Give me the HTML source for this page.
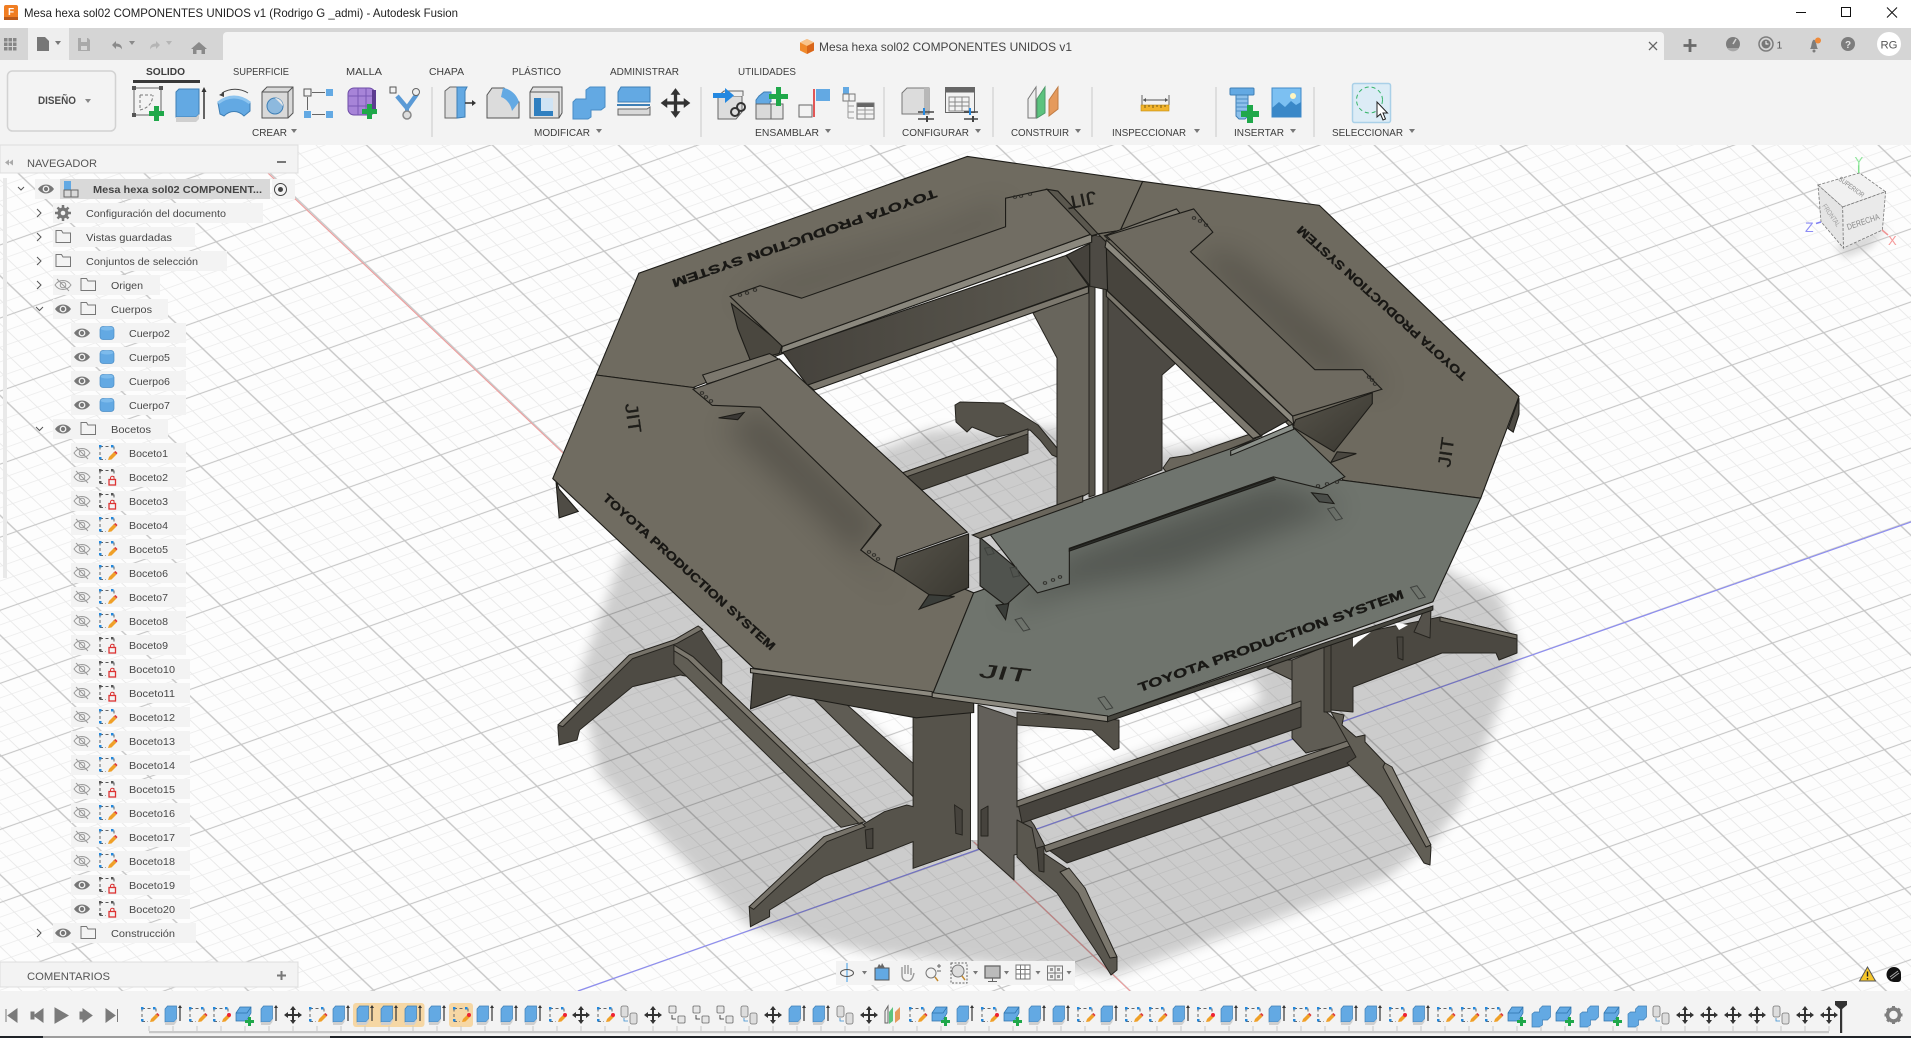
<!DOCTYPE html>
<html lang="es"><head><meta charset="utf-8"><title>Mesa hexa sol02 COMPONENTES UNIDOS v1 - Autodesk Fusion</title>
<style>
html,body{margin:0;padding:0;width:1911px;height:1038px;overflow:hidden;background:#fdfdfd}
svg{display:block}
text{font-family:"Liberation Sans",sans-serif;fill:#454545}
.s polygon,.s path,.s line{vector-effect:non-scaling-stroke}
.tr{font-size:10.5px;fill:#484848}
.tb{font-size:10.5px;fill:#3d3d3d}
.tt{font-weight:bold;fill:#191815;stroke:#191815;stroke-width:.35px}
.jt{fill:#1f1e1a;font-weight:normal;stroke:#1f1e1a;stroke-width:.3px}
</style></head><body>
<svg xmlns="http://www.w3.org/2000/svg" width="1911" height="1038" viewBox="0 0 1911 1038">
<defs>
<pattern id="grid" width="100" height="100" patternUnits="userSpaceOnUse" patternTransform="matrix(.919 -.324 .5607 .533 981 849)">
<path d="M20 0V100M40 0V100M60 0V100M80 0V100M0 20H100M0 40H100M0 60H100M0 80H100" stroke="#e9e9e9" stroke-width="1.1" fill="none"/>
<path d="M0 0V100M0 0H100M100 0V100M0 100H100" stroke="#c6c6c6" stroke-width="1.6" fill="none"/>
</pattern>
<filter id="b1" x="-10%" y="-10%" width="120%" height="120%"><feGaussianBlur stdDeviation="6"/></filter>
<filter id="b2" x="-30%" y="-30%" width="160%" height="160%"><feGaussianBlur stdDeviation="24 40"/></filter>
<filter id="b3" x="-30%" y="-30%" width="160%" height="160%"><feGaussianBlur stdDeviation="4"/></filter>
<clipPath id="topclip"><polygon points="670,18 1222,155 1535,690 1400,1265 890,1587 615,1526 335,1451 20,920 155,345"/></clipPath>
<linearGradient id="dk1" x1="0" y1="0" x2="1" y2="0"><stop offset="0" stop-color="#45423c"/><stop offset="1" stop-color="#5c5950"/></linearGradient>
<linearGradient id="dk2" x1="0" y1="0" x2="1" y2="1"><stop offset="0" stop-color="#57544b"/><stop offset="1" stop-color="#38362f"/></linearGradient>

<g id="eye"><path d="M-8 0C-4-6 4-6 8 0C4 6-4 6-8 0Z" fill="#777"/><circle r="3.4" fill="#f3f3f3"/><circle r="2.1" fill="#777"/></g>
<g id="eyeoff" fill="none" stroke="#9a9a9a"><path d="M-8 0C-4-6 4-6 8 0C4 6-4 6-8 0Z"/><circle r="2.8"/><path d="M-6-6L6 6"/></g>
<path id="fold" d="M-7-6.5h5.5l1.5 2.5h7.5v9.5h-14.500z" fill="none" stroke="#777" stroke-width="1"/>
<g id="cyl"><rect x="-7" y="-6.500" width="14" height="13" rx="3" fill="#63a9e3" stroke="#4c8dc6" stroke-width=".7"/><ellipse cy="-4.500" rx="6.500" ry="2" fill="#7dbbec"/></g>
<g id="skp"><path d="M-7-6.500h12M-7-6.500v12M-7 6.500h6M7-6.500v7" fill="none" stroke="#666" stroke-dasharray="3 2.500"/><path d="M-8-8h2.500v2.500h-2.500zM4-8h2.500v2.500h-2.500zM-8 4h2.500v2.500h-2.500z" fill="#2288dd"/><path d="M1 7l1-3 5-5 2.500 2.500-5 5z" fill="#f0a028"/><path d="M7-1l2.500 2.500 1-1.500-2-2z" fill="#dd3b3b"/></g>
<g id="skl"><path d="M-7-6.500h12M-7-6.500v12M-7 6.500h6M7-6.500v6" fill="none" stroke="#555" stroke-dasharray="3 2.500"/><path d="M-8-8h2.500v2.500h-2.500zM4-8h2.500v2.500h-2.500zM-8 4h2.500v2.500h-2.500z" fill="#555"/><rect x="2" y="2.500" width="6.500" height="5.500" fill="none" stroke="#d33" stroke-width="1.300"/><path d="M3.500 2.500v-1.500a1.800 1.800 0 0 1 3.600 0v1.500" fill="none" stroke="#d33"/></g>
<g id="skr"><path d="M-7-6.500h12M-7-6.500v12M-7 6.500h6M7-6.500v7" fill="none" stroke="#666" stroke-dasharray="3 2.500"/><path d="M-8-8h2.500v2.500h-2.500zM4-8h2.500v2.500h-2.500zM-8 4h2.500v2.500h-2.500z" fill="#2288dd"/><path d="M1 7l1-3 5-5 2.500 2.500-5 5z" fill="#f0a028"/><circle cx="8" cy="0" r="2" fill="#e23"/></g>
<g id="tex"><path d="M-8-6l2.500-3h9v13l-2.500 3h-9z" fill="#63a9e3" stroke="#3f7fb5" stroke-width=".7"/><path d="M-8 7h9l2.500-3v3l-2.500 3h-9z" fill="#cfcfcf"/><path d="M7-8v14" stroke="#333" stroke-width="1.200"/><path d="M7-10l-2 3h4z" fill="#333"/></g>
<g id="tbx"><path d="M-9-2l4-6h11v6l-4 7v1h-11z" fill="#63a9e3" stroke="#2d72ac" stroke-width=".7"/><path d="M-9-2h11l4-6" fill="none" stroke="#2d72ac" stroke-width=".7"/><path d="M3 2h3v3h3v3h-3v3h-3v-3h-3v-3h3z" fill="#1fa84a"/></g>
<g id="tmv" fill="#333"><path d="M-1-6h2v12h-2zM-6-1h12v2h-12z"/><path d="M0-9l3 4h-6zM0 9l3-4h-6zM-9 0l4-3v6zM9 0l-4-3v6z"/></g>
<g id="tln" fill="#ddd" stroke="#777" stroke-width=".8"><rect x="-8" y="-9" width="7" height="11" rx="2"/><rect x="1" y="-2" width="7" height="11" rx="2"/><path d="M-5 3v3h4" fill="none" stroke="#3a8ed0"/></g>
<g id="tcp" fill="#e6e6e6" stroke="#666" stroke-width=".8"><rect x="-8" y="-9" width="7" height="7" rx="1"/><rect x="1" y="1" width="7" height="7" rx="1"/><path d="M-5 0v4h4" fill="none" stroke="#222"/></g>
<g id="tcb"><path d="M-9-1l2.500-2h5v-3l3-3h8v11l-3 3h-5v5l-3 2h-7.500z" fill="#63a9e3" stroke="#3f7fb5" stroke-width=".7"/></g>
<g id="tpl"><path d="M-8-4l3-5v17h-3z" fill="#eee" stroke="#666"/><path d="M-4-3l4-5v14l-4 3z" fill="#5cc37e"/><path d="M2-3l5-5v12l-5 4z" fill="#e59a5c"/></g>
</defs>

<rect width="1911" height="1038" fill="#fdfdfd"/>
<rect width="1911" height="1038" fill="url(#grid)"/>
<path d="M232 139L563 453M974 842L1130 991" stroke="#ee9c9c" stroke-width="1.100" fill="none"/>
<path d="M578 991L974 851L1911 522" stroke="#8d8df0" stroke-width="1.200" fill="none"/>

<!-- floor shadow -->
<path fill="#000" opacity=".19" fill-rule="evenodd" filter="url(#b1)" d="M887 447L930 430L1057 427L1163 450L1261 439L1452 573L1500 595L1520 650L1490 733L1460 807L1435 840L1388 877L1331 900L1114 975L872 953L750 927L600 775L578 680L623 553L795 473ZM1014 727L1253 677L1262 700L1215 725L1019 800ZM838 695L920 705L920 770Z"/>
<rect x="971" y="700" width="7" height="140" fill="#fcfcfc"/>
<rect x="1095" y="280" width="8" height="215" fill="#fcfcfc"/>

<!-- structure visible through the opening (real coordinates) -->
<g stroke="#26241f" stroke-width="1" stroke-linejoin="round">
<polygon fill="#55524a" points="955,405 960,402 1003,403 1038,425 1057,448 1057,457 1052,455 1040,440 1030,430 997,437 972,427 967,432 956,422"/>
<polygon fill="#68655c" points="1033,313 1089,290 1089,493 1057,510 1057,358"/>
<polygon fill="#4c4941" points="902,473 1028,429 1028,453 922,490"/>
<polygon fill="#726e64" points="902,473 1028,429 1028,434 906,477"/>
<polygon fill="#57544c" points="1089,280 1095,280 1095,495 1089,497"/>
<polygon fill="#57544c" points="1103,280 1108,280 1108,492 1103,494"/>
<polygon fill="#4d4a44" points="1108,290 1177,362 1162,375 1162,470 1108,492"/>
<polygon fill="#4d4a44" points="1089,234 1108,238 1108,290 1089,286"/>
<polygon fill="#6a665c" points="1163,468 1170,458 1190,455 1215,446 1262,430 1262,436 1168,474"/>
</g>

<!-- legs -->
<g class="s" transform="translate(540 540) scale(.63776 .33333)" stroke="#26241f" stroke-width="1">
<polygon fill="#4e4b44" points="28,560 140,350 210,305 250,262 285,360 285,430 220,405 145,440 62,570 58,600 30,615"/>
<polygon fill="#77736a" points="28,555 140,345 210,300 248,258 255,268 215,310 145,356 36,560"/>
<polygon fill="#5f5c54" points="415,450 470,475 585,670 585,770"/>
<polygon fill="#56534b" points="585,510 675,490 675,925 585,985 585,905 445,1010 360,1110 360,1130 330,1160 328,1100 445,895 505,855 540,815 575,795 585,800"/>
<polygon fill="#77736a" points="328,1100 445,890 505,850 510,860 450,905 335,1108"/>
<polygon fill="#615e55" points="210,315 240,350 510,845 472,862 210,372"/>
<polygon fill="#7b776d" points="210,315 240,350 510,845 500,850 232,358 210,332"/>
<polygon fill="#46433d" points="650,795 662,810 662,885 652,880"/>
<polygon fill="#46433d" points="510,870 522,865 522,925 512,925"/>
</g>
<g stroke="#26241f" stroke-width="1" stroke-linejoin="round">
<polygon fill="#4b4841" points="1324,647 1345,636 1440,617 1517,635 1517,653 1499,660 1496,653 1442,653 1353,687 1353,712 1331,710"/>
<polygon fill="#726e64" points="1440,617 1517,635 1517,639 1440,621"/>
<polygon fill="#fcfcfc" stroke="none" points="1353,637 1371,632 1358,642 1353,647"/>
<polygon fill="#fcfcfc" stroke="none" points="1394,622 1408,625 1399,630"/>
<polygon fill="#55524b" points="1424,610 1431,608 1430,638 1414,632"/>
<polygon fill="#46433d" points="1397,637 1403,637 1403,660 1398,658"/>
<polygon fill="#5f5c54" points="1267,668 1283,660 1292,660 1292,680"/>
<polygon fill="#5f5c54" points="1292,660 1324,647 1324,710 1344,727 1356,740 1306,753 1292,738"/>
<polygon fill="#4c4941" points="1331,643 1324,647 1324,712 1331,712"/>
<!-- center right upright and fin -->
<polygon fill="#55524a" points="1017,712 1119,720 1119,748 1114,750 1092,730 1017,725"/>
<polygon fill="#63605a" points="978,705 1017,718 1017,802 1034,825 1046,848 1014,855 1014,880 978,848"/>
<polygon fill="#46433d" points="981,810 988,806 988,836 981,836"/>
<!-- beams -->
<polygon fill="#47443e" points="1018,803 1301,703 1301,727 1022,823"/>
<polygon fill="#77736a" points="1017,801 1301,701 1301,707 1017,807"/>
<polygon fill="#47443e" points="1046,848 1356,740 1356,763 1067,863"/>
<polygon fill="#77736a" points="1044,846 1356,738 1356,744 1046,852"/>
<!-- front right leg (far) -->
<polygon fill="#615e55" points="1331,712 1344,715 1342,725 1356,737 1365,735 1365,742 1385,763 1431,847 1430,865 1424,863 1414,847 1381,797 1347,763 1356,757"/>
<polygon fill="#7b776d" points="1385,763 1392,767 1431,845 1426,847 1383,767"/>
<!-- front right leg (near) -->
<polygon fill="#5a574f" points="1017,820 1032,828 1036,848 1069,870 1085,890 1117,957 1117,970 1111,975 1100,957 1057,893 1030,870 1017,857"/>
<polygon fill="#7b776d" points="1069,868 1085,888 1117,957 1110,958 1078,893 1060,872"/>
<polygon fill="#46433d" points="1037,848 1044,846 1044,872 1039,871"/>
</g>

<!-- table ring -->
<g class="s" transform="translate(540 150) scale(.63776 .35714)" stroke="#1d1c18" stroke-width="1.100">
<polygon fill="#4f4c45" points="25,925 30,1030 60,1012 30,950"/>
<polygon fill="#4f4c45" points="1535,695 1518,780 1526,790 1535,740"/>
<polygon fill="#4a473f" points="335,1451 330,1565 390,1525 590,1590 680,1575 680,1545 615,1530"/>
<polygon fill="#6f6b60" points="670,18 945,88 910,225 875,235 240,665 88,630 155,345"/>
<polygon fill="#6e6a5f" points="945,88 1222,155 1535,690 1475,975 1260,925 875,235 910,225"/>
<polygon fill="#706c61" points="88,630 240,665 345,715 535,1045 503,1120 560,1150 680,1240 615,1526 335,1451 20,920"/>
<polygon fill="#6f746d" points="1260,925 1475,975 1400,1265 890,1587 615,1526 680,1240 760,1190 830,1110 1150,910"/>
</g>
<g class="s" transform="translate(540 540) scale(.63776 .33333)" stroke="#1d1c18" stroke-width="1">
<polygon fill="#8d8a80" points="330,385 615,455 615,470 330,398"/>
<polygon fill="#8d8a80" points="615,458 890,528 890,545 615,472"/>
<polygon fill="#47463f" points="890,530 1400,198 1400,210 890,545"/>
</g>
<g transform="translate(540 150) scale(.63776 .35714)" clip-path="url(#topclip)">
<polygon fill="#000" opacity=".1" filter="url(#b2)" points="300,440 410,420 730,220 730,135 600,230 370,350"/>
<polygon fill="#000" opacity=".2" filter="url(#b2)" points="345,720 535,1050 503,1120 560,1260 420,1000 290,780"/>
<polygon fill="#000" opacity=".18" filter="url(#b2)" points="1025,290 1215,620 1330,680 1250,520 1080,280"/>
<polygon fill="#000" opacity=".24" filter="url(#b2)" points="830,1130 1150,930 1260,1000 1000,1180 830,1230 720,1300"/>
</g>

<!-- shelves -->
<g class="s" transform="translate(540 150) scale(.63776 .35714)" stroke="#1d1c18" stroke-width="1.100">
<!-- top shelf -->
<polygon fill="#4a473f" points="300,430 380,545 375,570 330,590 310,500"/>
<polygon fill="url(#dk1)" points="380,565 825,295 860,380 420,660"/>
<polygon fill="#7c786e" points="420,658 860,382 860,400 430,672"/>
<polygon fill="#45423c" points="825,295 862,262 862,380"/>
<polygon fill="#8b887e" points="380,550 865,235 865,258 378,568"/>
<polygon fill="#716d63" points="298,410 345,380 410,415 730,215 730,135 795,110 865,235 380,550"/>
<polygon fill="#5a574e" points="795,110 812,115 875,235 865,240"/>
<!-- left shelf -->
<polygon fill="#7c786e" points="255,630 360,570 378,590 262,655"/>
<polygon fill="#3a3835" points="280,750 320,735 310,755"/>
<polygon fill="url(#dk2)" points="560,1145 672,1075 672,1225 620,1265 595,1285 610,1245 555,1180"/>
<polygon fill="#716d63" points="240,670 375,585 670,1070 560,1140 555,1180 525,1150 503,1120 535,1050 345,720 270,715"/>
<!-- right shelf -->
<polygon fill="#7c786e" points="885,240 998,165 1004,178 892,252"/>
<polygon fill="#47443d" points="888,275 1180,750 1130,800 890,395"/>
<polygon fill="#7c786e" points="888,392 1130,800 1118,808 888,410"/>
<polygon fill="url(#dk2)" points="1185,755 1305,680 1305,710 1245,845 1180,775"/>
<polygon fill="#4a4740" points="1250,845 1280,850 1240,875"/>
<polygon fill="#6e6a60" points="888,240 1025,165 1055,230 1020,285 1215,615 1290,615 1320,670 1180,745"/>
<polygon fill="#8b887e" points="888,252 1180,745 1182,770 886,272"/>
<!-- bottom shelf -->
<polygon fill="#50534e" points="690,1085 760,1190 768,1215 730,1275 690,1220"/>
<polygon fill="#6f746e" points="705,1075 1180,775 1262,915 1225,948 1150,915 830,1115 830,1215 780,1240 755,1190"/>
<polygon fill="#8b908a" points="1083,842 1180,768 1182,782 1083,855"/>
<polygon fill="#6a665c" points="678,1078 851,968 851,985 690,1088"/>
<polygon fill="#2d302d" points="830,1117 1150,918 1153,923 830,1123"/>
<polygon fill="#4a4d49" points="1210,960 1235,965 1245,990 1222,985"/>
<polygon fill="#3a3d39" points="595,1285 610,1245 650,1250"/>
<polygon fill="#3a3d39" points="715,1275 735,1270 730,1315"/>
<g fill="none" stroke="#3f423e" stroke-width="1">
<polygon points="1235,1005 1245,1000 1258,1032 1248,1037"/>
<polygon points="745,1315 755,1310 768,1342 758,1347"/>
<polygon points="1365,1225 1375,1220 1388,1252 1378,1257"/>
<polygon points="875,1535 885,1530 898,1562 888,1567"/>
<polygon points="697,1115 707,1112 712,1130 702,1134"/>
<polygon points="737,1170 747,1168 752,1192 742,1196"/>
</g>
</g>
<!-- bolt holes -->
<g fill="none" stroke="#2b2a26" stroke-width=".8">
<ellipse cx="740" cy="295" rx="1.800" ry="1.300"/><ellipse cx="747" cy="293" rx="1.800" ry="1.300"/><ellipse cx="755" cy="290" rx="1.800" ry="1.300"/>
<ellipse cx="702" cy="393" rx="1.800" ry="1.300"/><ellipse cx="706" cy="397" rx="1.800" ry="1.300"/><ellipse cx="711" cy="401" rx="1.800" ry="1.300"/>
<ellipse cx="869" cy="552" rx="1.800" ry="1.300"/><ellipse cx="874" cy="555" rx="1.800" ry="1.300"/><ellipse cx="878" cy="559" rx="1.800" ry="1.300"/>
<ellipse cx="1045" cy="583" rx="1.800" ry="1.300"/><ellipse cx="1053" cy="580" rx="1.800" ry="1.300"/><ellipse cx="1060" cy="577" rx="1.800" ry="1.300"/>
<ellipse cx="1194" cy="218" rx="1.800" ry="1.300"/><ellipse cx="1200" cy="221" rx="1.800" ry="1.300"/><ellipse cx="1206" cy="225" rx="1.800" ry="1.300"/>
<ellipse cx="1369" cy="377" rx="1.800" ry="1.300"/><ellipse cx="1372" cy="380" rx="1.800" ry="1.300"/><ellipse cx="1375" cy="384" rx="1.800" ry="1.300"/>
<ellipse cx="1015" cy="197" rx="1.800" ry="1.300"/><ellipse cx="1021" cy="196" rx="1.800" ry="1.300"/><ellipse cx="1030" cy="194" rx="1.800" ry="1.300"/>
<ellipse cx="1318" cy="486" rx="1.800" ry="1.300"/><ellipse cx="1327" cy="484" rx="1.800" ry="1.300"/><ellipse cx="1337" cy="482" rx="1.800" ry="1.300"/>
</g>

<!-- engraved text -->
<text class="tt" transform="translate(935 189) rotate(161)" font-size="12" textLength="279" lengthAdjust="spacingAndGlyphs">TOYOTA PRODUCTION SYSTEM</text>
<text class="tt" transform="translate(1468 375) rotate(-138)" font-size="12" textLength="224" lengthAdjust="spacingAndGlyphs">TOYOTA PRODUCTION SYSTEM</text>
<text class="tt" transform="translate(602 499) rotate(42)" font-size="12" textLength="227" lengthAdjust="spacingAndGlyphs">TOYOTA PRODUCTION SYSTEM</text>
<text class="tt" transform="translate(1140 692) rotate(-19.6)" font-size="12.500" textLength="281" lengthAdjust="spacingAndGlyphs">TOYOTA PRODUCTION SYSTEM</text>
<text class="jt" transform="translate(1095 191) rotate(168)" font-size="18" textLength="30" lengthAdjust="spacingAndGlyphs">JIT</text>
<text class="jt" transform="translate(625 404) rotate(82)" font-size="18" textLength="30" lengthAdjust="spacingAndGlyphs">JIT</text>
<text class="jt" transform="translate(1450 468) rotate(-82)" font-size="18" textLength="30" lengthAdjust="spacingAndGlyphs">JIT</text>
<text class="jt" transform="translate(978 677) rotate(6) skewX(-12)" font-size="19" textLength="50" lengthAdjust="spacingAndGlyphs">JIT</text>

<!-- view cube -->
<g>
<polygon points="1835,246 1888,226 1870,248 1845,258" fill="#bbb" opacity=".55" filter="url(#b3)"/>
<polygon points="1818,185 1859.500,173 1885.600,191.700 1882.400,230 1843.400,248 1821,221.700" fill="#ececec" opacity=".9"/>
<polygon points="1818,185 1859.500,173 1885.600,191.700 1842.600,207" fill="#f1f1f1" stroke="#777" stroke-dasharray="3 1.500" stroke-width=".8"/>
<polygon points="1842.600,207 1885.600,191.700 1882.400,230 1843.400,248" fill="#eaeaea" stroke="#777" stroke-dasharray="3 1.500" stroke-width=".8"/>
<polygon points="1818,185 1842.600,207 1843.400,248 1821,221.700" fill="#e4e4e4" stroke="#777" stroke-dasharray="3 1.500" stroke-width=".8"/>
<text transform="translate(1848 230) rotate(-19)" font-size="8.500" style="fill:#8a8a8a" textLength="34" lengthAdjust="spacingAndGlyphs">DERECHA</text>
<text transform="translate(1838 180) rotate(36)" font-size="7" style="fill:#8a8a8a" textLength="30" lengthAdjust="spacingAndGlyphs">SUPERIOR</text>
<text transform="translate(1822 206) rotate(55)" font-size="7" style="fill:#a0a0a0" textLength="26" lengthAdjust="spacingAndGlyphs">FRONTAL</text>
<path d="M1858.700 173v-8" stroke="#7ee08a" stroke-width="1.500"/><text x="1854.500" y="166" font-size="13" style="fill:#8ee69a">Y</text>
<path d="M1821 222l-5 1.500" stroke="#7f7ff0" stroke-width="1.500"/><text x="1805" y="232" font-size="14" style="fill:#8d8df5">Z</text>
<path d="M1882 230l6 5" stroke="#f09595" stroke-width="1.500"/><text x="1888" y="245" font-size="13" style="fill:#f59a9a">X</text>
</g>

<!-- Title bar -->
<rect width="1911" height="28" fill="#fff"/>
<rect x="4" y="5" width="14" height="15" rx="2" fill="#f07d22"/><rect x="4" y="17" width="14" height="3" fill="#b9591a"/>
<text x="8" y="15" font-size="10" font-weight="bold" style="fill:#fff">F</text>
<text x="24" y="17" font-size="12" style="fill:#222" textLength="434" lengthAdjust="spacingAndGlyphs">Mesa hexa sol02 COMPONENTES UNIDOS v1 (Rodrigo G _admi) - Autodesk Fusion</text>
<path d="M1796 12.500h10" stroke="#111" stroke-width="1"/>
<rect x="1841.500" y="7.500" width="9" height="9" fill="none" stroke="#111"/>
<path d="M1887 7.500l10 10M1897 7.500l-10 10" stroke="#111"/>

<!-- tab bar -->
<rect y="28" width="1911" height="32" fill="#d5d5d5"/>
<rect x="28" y="28" width="41" height="32" fill="#eeeeee"/>
<path d="M223 60V36a4 4 0 0 1 4-4H1660a4 4 0 0 1 4 4V60z" fill="#f3f3f3"/>
<g fill="#868686"><rect x="4" y="38" width="3.500" height="3.500"/><rect x="8.500" y="38" width="3.500" height="3.500"/><rect x="13" y="38" width="3.500" height="3.500"/><rect x="4" y="42.500" width="3.500" height="3.500"/><rect x="8.500" y="42.500" width="3.500" height="3.500"/><rect x="13" y="42.500" width="3.500" height="3.500"/><rect x="4" y="47" width="3.500" height="3.500"/><rect x="8.500" y="47" width="3.500" height="3.500"/><rect x="13" y="47" width="3.500" height="3.500"/></g>
<path d="M37 37h8l4 4v10H37z" fill="#777"/><path d="M55 41h6l-3 4z" fill="#777"/>
<path d="M78 38h10l2 2v11H78z" fill="#a9a9a9"/><rect x="81" y="38" width="6" height="4" fill="#d5d5d5"/><rect x="81" y="46" width="6" height="4" fill="#d5d5d5"/>
<path d="M112 45l4-4v2.500c4 0 6 2 6 6-1-2-3-3-6-3v2.500z" fill="#8a8a8a"/><path d="M129 41h6l-3 4z" fill="#8a8a8a"/>
<path d="M160 45l-4-4v2.500c-4 0-6 2-6 6 1-2 3-3 6-3v2.500z" fill="#b5b5b5"/><path d="M166 41h6l-3 4z" fill="#b5b5b5"/>
<path d="M199 42l8 7h-2v5h-3.500v-4h-5v4H193v-5h-2z" fill="#8a8a8a"/>
<path d="M807 39l7 3.500v8L807 54l-7-3.500v-8z" fill="#f08a2c"/><path d="M807 39l7 3.500-7 3.500-7-3.500z" fill="#f8c48c"/><path d="M807 46l7-3.500v8L807 54z" fill="#d9661a"/>
<text x="819" y="51" font-size="12" style="fill:#444" textLength="253" lengthAdjust="spacingAndGlyphs">Mesa hexa sol02 COMPONENTES UNIDOS v1</text>
<path d="M1649 42l8 8M1657 42l-8 8" stroke="#666" stroke-width="1.300"/>
<path d="M1690 39v13M1683.500 45.500h13" stroke="#6a6a6a" stroke-width="2.800"/>
<circle cx="1733" cy="44" r="7" fill="#7d7d7d"/><path d="M1733 44l3-5" stroke="#d5d5d5" stroke-width="1.500"/><path d="M1727 48a7 7 0 0 0 12 0z" fill="#a8a8a8"/>
<circle cx="1766" cy="44" r="7" fill="#d5d5d5" stroke="#7d7d7d" stroke-width="1.500"/><circle cx="1766" cy="44" r="4.500" fill="#777"/><path d="M1766 41v3h2.500" stroke="#fff" fill="none"/>
<text x="1776.500" y="48.500" font-size="10.500" style="fill:#555">1</text>
<path d="M1810 49c2-2 1-8 4-9.500 3 1.500 2 7.500 4 9.500z" fill="#7d7d7d"/><circle cx="1814" cy="51" r="1.500" fill="#7d7d7d"/><circle cx="1818" cy="40.500" r="3" fill="#ee8a3a"/>
<circle cx="1848" cy="44" r="7" fill="#7d7d7d"/><text x="1845" y="48" font-size="10" font-weight="bold" style="fill:#e5e5e5">?</text>
<circle cx="1889" cy="44" r="12" fill="#fff"/><text x="1880.500" y="48.500" font-size="11" style="fill:#555" textLength="17" lengthAdjust="spacingAndGlyphs">RG</text>

<!-- toolbar -->
<rect y="60" width="1911" height="85" fill="#f3f3f3"/>
<rect x="7.500" y="71" width="108" height="60" rx="5" fill="#f3f3f3" stroke="#d2d2d2" stroke-width="1.500"/>
<text x="38" y="104" font-size="11" font-weight="bold" style="fill:#4a4a4a" textLength="38" lengthAdjust="spacingAndGlyphs">DISEÑO</text>
<path d="M85 99h6l-3 4z" fill="#888"/>
<text x="146" y="75" class="tb" font-weight="bold" textLength="39" lengthAdjust="spacingAndGlyphs">SOLIDO</text>
<rect x="133" y="80" width="67" height="3" fill="#383838"/>
<text x="233" y="75" class="tb" textLength="56" lengthAdjust="spacingAndGlyphs">SUPERFICIE</text>
<text x="346" y="75" class="tb" textLength="36" lengthAdjust="spacingAndGlyphs">MALLA</text>
<text x="429" y="75" class="tb" textLength="35" lengthAdjust="spacingAndGlyphs">CHAPA</text>
<text x="512" y="75" class="tb" textLength="49" lengthAdjust="spacingAndGlyphs">PLÁSTICO</text>
<text x="610" y="75" class="tb" textLength="69" lengthAdjust="spacingAndGlyphs">ADMINISTRAR</text>
<text x="738" y="75" class="tb" textLength="58" lengthAdjust="spacingAndGlyphs">UTILIDADES</text>
<g class="tb">
<text x="252" y="136" class="tb" textLength="35" lengthAdjust="spacingAndGlyphs">CREAR</text>
<text x="534" y="136" class="tb" textLength="56" lengthAdjust="spacingAndGlyphs">MODIFICAR</text>
<text x="755" y="136" class="tb" textLength="64" lengthAdjust="spacingAndGlyphs">ENSAMBLAR</text>
<text x="902" y="136" class="tb" textLength="67" lengthAdjust="spacingAndGlyphs">CONFIGURAR</text>
<text x="1011" y="136" class="tb" textLength="58" lengthAdjust="spacingAndGlyphs">CONSTRUIR</text>
<text x="1112" y="136" class="tb" textLength="74" lengthAdjust="spacingAndGlyphs">INSPECCIONAR</text>
<text x="1234" y="136" class="tb" textLength="50" lengthAdjust="spacingAndGlyphs">INSERTAR</text>
<text x="1332" y="136" class="tb" textLength="71" lengthAdjust="spacingAndGlyphs">SELECCIONAR</text>
</g>
<path d="M291 129h6l-3 4zM596 129h6l-3 4zM825 129h6l-3 4zM975 129h6l-3 4zM1075 129h6l-3 4zM1194 129h6l-3 4zM1290 129h6l-3 4zM1409 129h6l-3 4z" fill="#777"/>
<path d="M432 87v50M701 87v50M884 87v50M993 87v50M1092 87v50M1216 87v50M1314 87v50" stroke="#d8d8d8" stroke-width="1.500"/>

<!-- toolbar icons -->
<g>
<rect x="134" y="88" width="27" height="27" fill="none" stroke="#666"/><path d="M132 86h4v4h-4zM159 86h4v4h-4zM132 113h4v4h-4z" fill="#555"/><path d="M140 95h12M140 95v15M140 110c8-2 12-6 13-15" fill="none" stroke="#777" stroke-dasharray="3 2"/><path d="M154 106h5v5h5v5h-5v5h-5v-5h-5v-5h5z" fill="#1fa84a"/>
<path d="M176 92l3-3h20v25l-3 3h-20z" fill="#63a9e3" stroke="#3f7fb5"/><path d="M176 117h20l3-3v5l-3 3h-20z" fill="#cfcfcf"/><path d="M204 119V92" stroke="#333" stroke-width="1.500"/><path d="M204 87l-2.500 5h5z" fill="#333"/>
<path d="M218 103c10-8 22-8 32 0v8l-6 5c-6-6-14-6-20 0l-4-2z" fill="#63a9e3" stroke="#3f7fb5"/><path d="M218 103c10-8 22-8 32 0" fill="none" stroke="#8dc4ef" stroke-width="3"/><path d="M222 93c8-5 18-5 26 0" fill="none" stroke="#444"/><path d="M219 95l5-3 0 5z" fill="#444"/>
<path d="M262 92l5-5h26v26l-5 5h-26z" fill="#d9d9d9" stroke="#555"/><path d="M262 92h26v26M288 92l5-5" fill="none" stroke="#555"/><circle cx="275" cy="106" r="8" fill="#8db9de" stroke="#3f7fb5"/><path d="M275 98a8 8 0 0 1 8 8" fill="#e8e8e8"/>
<rect x="304" y="89" width="7" height="7" fill="#f3f3f3" stroke="#555"/><rect x="326" y="89" width="7" height="7" fill="#63a9e3"/><rect x="304" y="111" width="7" height="7" fill="#63a9e3"/><rect x="326" y="111" width="7" height="7" fill="#63a9e3"/><path d="M312 92.500h13M312 114.500h13M307.500 97v13" stroke="#666"/>
<rect x="348" y="88" width="27" height="27" rx="6" fill="#a784d8" stroke="#6c4ba6"/><path d="M348 96h27M348 106h27M358 88v27M366 88v27" stroke="#7a58b5"/><rect x="372" y="90" width="4" height="22" fill="#5d3c90"/><path d="M367 104h5v5h5v5h-5v5h-5v-5h-5v-5h5z" fill="#1fa84a"/>
<rect x="390" y="87" width="6" height="6" fill="#f3f3f3" stroke="#555"/><path d="M397 96l10 12 10-14" fill="none" stroke="#5a9ad6" stroke-width="4.500"/><path d="M407 108v6" stroke="#5a9ad6" stroke-width="4"/><circle cx="407" cy="115" r="4" fill="#ddd" stroke="#888" stroke-width="1.500"/><circle cx="416" cy="92" r="3.500" fill="#eee" stroke="#666"/>
<path d="M445 91l5-4h7v31h-12z" fill="#ddd" stroke="#666"/><path d="M457 87h10l-2 4v26l-8 1z" fill="#63a9e3" stroke="#3f7fb5"/><path d="M465 103h8" stroke="#333" stroke-width="1.500"/><path d="M476 103l-4-3v6z" fill="#333"/>
<path d="M487 118V95l5-7h12l15 14v16z" fill="#dcdcdc" stroke="#555"/><path d="M503 88c8 1 14 7 16 14l-7 9c-1-6-5-12-11-14z" fill="#63a9e3"/>
<path d="M530 92l3-5h29v26l-3 5h-29z" fill="#e2e2e2" stroke="#555"/><path d="M530 92h29v26" fill="none" stroke="#555"/><path d="M534 98h7v13h12v5h-19z" fill="#2f7fc0"/><path d="M541 98h12v13h-12z" fill="#cfe3f4"/>
<path d="M573 102l3-3h10V90l4-3h15v20l-4 3H591v7l-3 2h-15z" fill="#63a9e3" stroke="#4a8cc4"/>
<path d="M618 92l3-5h29v15h-32z" fill="#63a9e3" stroke="#3f7fb5"/><path d="M617 105h33" stroke="#3f7fb5" stroke-width="2"/><path d="M618 109h29l3-2v8h-32z" fill="#d9d9d9" stroke="#666"/>
<g transform="translate(675.500 103) scale(1.650)"><use href="#tmv"/></g>
<path d="M718 96h24v16l-6 7h-18z" fill="#ddd" stroke="#666"/><path d="M718 96l6-5h19v5" fill="#eee" stroke="#666"/><path d="M713 93h12v-5l9 7.500-9 7.500v-5h-12z" fill="#2488e0"/><circle cx="735" cy="112" r="4" fill="none" stroke="#333" stroke-width="2"/><circle cx="741" cy="107" r="4" fill="none" stroke="#333" stroke-width="2"/>
<path d="M756 100l3-4h11v16h-14z" fill="#63a9e3" stroke="#3f7fb5"/><path d="M759 96l5-4h7v10" fill="#63a9e3" stroke="#3f7fb5"/><path d="M756 104h15v15h-15z" fill="#d9d9d9" stroke="#666"/><path d="M771 104h12v15h-12z" fill="#e4e4e4" stroke="#666"/><path d="M776 87h5v7h7v5h-7v7h-5v-7h-7v-5h7z" fill="#1fa84a"/>
<rect x="799" y="105" width="13" height="12" fill="#f3f3f3" stroke="#666"/><path d="M814 89v28" stroke="#d22" stroke-width="1.500"/><rect x="816" y="89" width="14" height="12" fill="#63a9e3"/>
<rect x="843" y="87" width="6" height="7" fill="#63a9e3"/><rect x="843" y="94" width="6" height="7" fill="#f3f3f3" stroke="#777"/><rect x="849" y="94" width="6" height="7" fill="#f3f3f3" stroke="#777"/><path d="M848 101v17M848 106h6M848 112h6M848 118h6" stroke="#999"/><rect x="857" y="103" width="17" height="4" fill="#666"/><rect x="857" y="103" width="17" height="16" fill="none" stroke="#777"/><path d="M857 110h17M857 114h17M865 107v12" stroke="#999"/>
<path d="M902 93l5-5h22v26h-27z" fill="#dcdcdc" stroke="#777"/><path d="M924 88v26l5-4V88" fill="#b8b8b8"/><path d="M918 112h16M918 119h16" stroke="#444" stroke-width="1.500"/><path d="M924 108v7" stroke="#2488e0" stroke-width="2"/><path d="M927 116v6" stroke="#444" stroke-width="2"/>
<rect x="945.500" y="87.500" width="29" height="25" fill="#f3f3f3" stroke="#666"/><rect x="945.500" y="87.500" width="29" height="5" fill="#666"/><path d="M949 97h20v14h-20zM949 102h20M949 106h20M955 97v14M962 97v14" stroke="#888" fill="none"/><path d="M964 112h14M964 119h14" stroke="#444" stroke-width="1.500"/><path d="M970 108v7" stroke="#2488e0" stroke-width="2"/><path d="M973 116v6" stroke="#444" stroke-width="2"/>
<path d="M1028 118V99l8-12v31z" fill="#eee" stroke="#777"/><path d="M1037 118V99l8-12v26z" fill="#5cc37e" stroke="#4c9a68"/><path d="M1049 116V100l9-13v22z" fill="#e59a5c" stroke="#c07c45"/>
<path d="M1142 95v10M1169 95v10" stroke="#666"/><path d="M1143 100h25" stroke="#555"/><path d="M1143 100l3-2v4zM1168 100l-3-2v4z" fill="#555"/><rect x="1141" y="105" width="28" height="6" fill="#f2b42c" stroke="#c08a10" stroke-width=".6"/><path d="M1145 105v3M1149 105v2M1153 105v3M1157 105v2M1161 105v3M1165 105v2" stroke="#7a5a10"/>
<rect x="1230" y="88" width="24" height="7" rx="1" fill="#63a9e3" stroke="#3f7fb5"/><path d="M1236 95h12v21l-3 3h-6l-3-3z" fill="#8dc0ea" stroke="#3f7fb5"/><path d="M1236 99h12M1236 103h12M1236 107h12M1236 111h12" stroke="#4a8cc4"/><path d="M1247 105h6v6h6v6h-6v6h-6v-6h-6v-6h6z" fill="#1fa84a"/>
<rect x="1272" y="88" width="29" height="29" fill="#7cc0f2" stroke="#3f8ac8"/><circle cx="1293" cy="96" r="3" fill="#fff5c0"/><path d="M1272 108l7-6 6 5 6-6 5 4 5-3v15h-29z" fill="#3a88c8"/>
<rect x="1352.500" y="83.500" width="38" height="39" rx="2" fill="#dcecf6" stroke="#a9d0e8" stroke-width="1.500"/>
<circle cx="1369.500" cy="100" r="13" fill="none" stroke="#36b46a" stroke-dasharray="4 3"/>
<path d="M1377 102v15l3.500-3 2.500 6 2.500-1-2.500-6h4.500z" fill="#fff" stroke="#222"/>
</g>

<!-- navigator -->
<rect y="145" width="298" height="28" fill="#f3f3f3" stroke="#dedede"/>
<path d="M13 159.500l-4 3 4 3zM9 159.500l-4 3 4 3z" fill="#aaa"/>
<text x="27" y="167" font-size="11" style="fill:#555" textLength="70" lengthAdjust="spacingAndGlyphs">NAVEGADOR</text>
<rect x="277" y="161" width="9" height="2" fill="#777"/>
<rect x="3" y="178" width="4" height="400" fill="#e9e9e9"/>

<g fill="#f3f3f3">
<rect x="35" y="179" width="25" height="20"/><rect x="272" y="179" width="23" height="20"/>
<rect x="53" y="203" width="210" height="20"/><rect x="53" y="227" width="142" height="20"/><rect x="53" y="251" width="174" height="20"/>
<rect x="53" y="275" width="107" height="20"/><rect x="53" y="299" width="115" height="20"/>
<rect x="71" y="323" width="115" height="20"/><rect x="71" y="347" width="115" height="20"/><rect x="71" y="371" width="115" height="20"/><rect x="71" y="395" width="115" height="20"/>
<rect x="53" y="419" width="115" height="20"/>
<rect x="71" y="443" width="115" height="20"/><rect x="71" y="467" width="115" height="20"/><rect x="71" y="491" width="115" height="20"/><rect x="71" y="515" width="115" height="20"/><rect x="71" y="539" width="115" height="20"/><rect x="71" y="563" width="115" height="20"/><rect x="71" y="587" width="115" height="20"/><rect x="71" y="611" width="115" height="20"/><rect x="71" y="635" width="115" height="20"/>
<rect x="71" y="659" width="119" height="20"/><rect x="71" y="683" width="119" height="20"/><rect x="71" y="707" width="119" height="20"/><rect x="71" y="731" width="119" height="20"/><rect x="71" y="755" width="119" height="20"/><rect x="71" y="779" width="119" height="20"/><rect x="71" y="803" width="119" height="20"/><rect x="71" y="827" width="119" height="20"/><rect x="71" y="851" width="119" height="20"/><rect x="71" y="875" width="119" height="20"/><rect x="71" y="899" width="119" height="20"/>
<rect x="53" y="923" width="143" height="20"/>
</g>
<rect x="60" y="179" width="210" height="20" fill="#d9d9d9"/>

<g fill="none" stroke="#555" stroke-width="1">
<path d="M18 187l3 3 3-3"/>
<path d="M37 209l4 4-4 4M37 233l4 4-4 4M37 257l4 4-4 4M37 281l4 4-4 4M37 929l4 4-4 4"/>
<path d="M36 307l3.500 3.500 3.500-3.500M36 427l3.500 3.500 3.500-3.500"/>
</g>
<use href="#eye" x="46" y="189"/>
<g transform="translate(60 180)"><rect x="4" y="1" width="7" height="9" fill="#63a9e3"/><rect x="4" y="10" width="7" height="7" fill="none" stroke="#666"/><rect x="11" y="10" width="7" height="7" fill="none" stroke="#666"/></g>
<text x="93" y="193" font-size="10.500" font-weight="bold" style="fill:#444" textLength="169" lengthAdjust="spacingAndGlyphs">Mesa hexa sol02 COMPONENT...</text>
<circle cx="280.500" cy="189.500" r="6" fill="none" stroke="#444"/><circle cx="280.500" cy="189.500" r="2.500" fill="#444"/>

<g transform="translate(63 213)"><circle r="5.500" fill="#777"/><circle r="2.300" fill="#f3f3f3"/><path d="M0-8v3M0 5v3M-8 0h3M5 0h3M-5.500-5.500l2 2M3.500 3.500l2 2M5.500-5.500l-2 2M-3.500 3.500l-2 2" stroke="#777" stroke-width="2.500"/></g>
<text x="86" y="217" class="tr" textLength="140" lengthAdjust="spacingAndGlyphs">Configuración del documento</text>
<use href="#fold" x="63" y="237"/><text x="86" y="241" class="tr" textLength="86" lengthAdjust="spacingAndGlyphs">Vistas guardadas</text>
<use href="#fold" x="63" y="261"/><text x="86" y="265" class="tr" textLength="112" lengthAdjust="spacingAndGlyphs">Conjuntos de selección</text>
<use href="#eyeoff" x="63" y="285"/><use href="#fold" x="88" y="285"/><text x="111" y="289" class="tr" textLength="32" lengthAdjust="spacingAndGlyphs">Origen</text>
<use href="#eye" x="63" y="309"/><use href="#fold" x="88" y="309"/><text x="111" y="313" class="tr" textLength="41" lengthAdjust="spacingAndGlyphs">Cuerpos</text>
<use href="#eye" x="82" y="333"/><use href="#cyl" x="107" y="333"/><text x="129" y="337" class="tr" textLength="41" lengthAdjust="spacingAndGlyphs">Cuerpo2</text>
<use href="#eye" x="82" y="357"/><use href="#cyl" x="107" y="357"/><text x="129" y="361" class="tr" textLength="41" lengthAdjust="spacingAndGlyphs">Cuerpo5</text>
<use href="#eye" x="82" y="381"/><use href="#cyl" x="107" y="381"/><text x="129" y="385" class="tr" textLength="41" lengthAdjust="spacingAndGlyphs">Cuerpo6</text>
<use href="#eye" x="82" y="405"/><use href="#cyl" x="107" y="405"/><text x="129" y="409" class="tr" textLength="41" lengthAdjust="spacingAndGlyphs">Cuerpo7</text>
<use href="#eye" x="63" y="429"/><use href="#fold" x="88" y="429"/><text x="111" y="433" class="tr" textLength="40" lengthAdjust="spacingAndGlyphs">Bocetos</text>

<use href="#eyeoff" x="82" y="453"/><use href="#skp" x="107" y="453"/><text x="129" y="457" class="tr" textLength="39" lengthAdjust="spacingAndGlyphs">Boceto1</text>
<use href="#eyeoff" x="82" y="477"/><use href="#skl" x="107" y="477"/><text x="129" y="481" class="tr" textLength="39" lengthAdjust="spacingAndGlyphs">Boceto2</text>
<use href="#eyeoff" x="82" y="501"/><use href="#skl" x="107" y="501"/><text x="129" y="505" class="tr" textLength="39" lengthAdjust="spacingAndGlyphs">Boceto3</text>
<use href="#eyeoff" x="82" y="525"/><use href="#skp" x="107" y="525"/><text x="129" y="529" class="tr" textLength="39" lengthAdjust="spacingAndGlyphs">Boceto4</text>
<use href="#eyeoff" x="82" y="549"/><use href="#skp" x="107" y="549"/><text x="129" y="553" class="tr" textLength="39" lengthAdjust="spacingAndGlyphs">Boceto5</text>
<use href="#eyeoff" x="82" y="573"/><use href="#skp" x="107" y="573"/><text x="129" y="577" class="tr" textLength="39" lengthAdjust="spacingAndGlyphs">Boceto6</text>
<use href="#eyeoff" x="82" y="597"/><use href="#skp" x="107" y="597"/><text x="129" y="601" class="tr" textLength="39" lengthAdjust="spacingAndGlyphs">Boceto7</text>
<use href="#eyeoff" x="82" y="621"/><use href="#skp" x="107" y="621"/><text x="129" y="625" class="tr" textLength="39" lengthAdjust="spacingAndGlyphs">Boceto8</text>
<use href="#eyeoff" x="82" y="645"/><use href="#skl" x="107" y="645"/><text x="129" y="649" class="tr" textLength="39" lengthAdjust="spacingAndGlyphs">Boceto9</text>
<use href="#eyeoff" x="82" y="669"/><use href="#skl" x="107" y="669"/><text x="129" y="673" class="tr" textLength="46" lengthAdjust="spacingAndGlyphs">Boceto10</text>
<use href="#eyeoff" x="82" y="693"/><use href="#skl" x="107" y="693"/><text x="129" y="697" class="tr" textLength="46" lengthAdjust="spacingAndGlyphs">Boceto11</text>
<use href="#eyeoff" x="82" y="717"/><use href="#skp" x="107" y="717"/><text x="129" y="721" class="tr" textLength="46" lengthAdjust="spacingAndGlyphs">Boceto12</text>
<use href="#eyeoff" x="82" y="741"/><use href="#skp" x="107" y="741"/><text x="129" y="745" class="tr" textLength="46" lengthAdjust="spacingAndGlyphs">Boceto13</text>
<use href="#eyeoff" x="82" y="765"/><use href="#skp" x="107" y="765"/><text x="129" y="769" class="tr" textLength="46" lengthAdjust="spacingAndGlyphs">Boceto14</text>
<use href="#eyeoff" x="82" y="789"/><use href="#skl" x="107" y="789"/><text x="129" y="793" class="tr" textLength="46" lengthAdjust="spacingAndGlyphs">Boceto15</text>
<use href="#eyeoff" x="82" y="813"/><use href="#skp" x="107" y="813"/><text x="129" y="817" class="tr" textLength="46" lengthAdjust="spacingAndGlyphs">Boceto16</text>
<use href="#eyeoff" x="82" y="837"/><use href="#skp" x="107" y="837"/><text x="129" y="841" class="tr" textLength="46" lengthAdjust="spacingAndGlyphs">Boceto17</text>
<use href="#eyeoff" x="82" y="861"/><use href="#skp" x="107" y="861"/><text x="129" y="865" class="tr" textLength="46" lengthAdjust="spacingAndGlyphs">Boceto18</text>
<use href="#eye" x="82" y="885"/><use href="#skl" x="107" y="885"/><text x="129" y="889" class="tr" textLength="46" lengthAdjust="spacingAndGlyphs">Boceto19</text>
<use href="#eye" x="82" y="909"/><use href="#skl" x="107" y="909"/><text x="129" y="913" class="tr" textLength="46" lengthAdjust="spacingAndGlyphs">Boceto20</text>
<use href="#eye" x="63" y="933"/><use href="#fold" x="88" y="933"/><text x="111" y="937" class="tr" textLength="64" lengthAdjust="spacingAndGlyphs">Construcción</text>

<!-- comments -->
<rect y="962" width="298" height="25" fill="#f3f3f3" stroke="#dedede"/>
<text x="27" y="980" font-size="11" style="fill:#555" textLength="83" lengthAdjust="spacingAndGlyphs">COMENTARIOS</text>
<path d="M281.500 971v9M277 975.500h9" stroke="#777" stroke-width="2"/>

<!-- view toolbar -->
<rect x="836" y="961" width="239" height="24" fill="#f3f3f3"/>
<g>
<path d="M847 963v19" stroke="#7ab8ea" stroke-width="1.500"/><ellipse cx="847" cy="973" rx="6.500" ry="3.500" fill="none" stroke="#555"/>
<path d="M862 971h5l-2.500 3.500z" fill="#777"/>
<rect x="875" y="968" width="14" height="12" fill="#63a9e3" stroke="#555"/><path d="M877 968l2-4 2 2 1-3 3 5z" fill="#666"/>
<path d="M902 975v-8M905 974v-9M908 974v-9M911 975v-7M902 975c0 5 3 6 6 6s5-3 6-8" fill="none" stroke="#999" stroke-width="1.400"/>
<circle cx="931" cy="973" r="5" fill="none" stroke="#777"/><path d="M935 977l3 4" stroke="#c48a30" stroke-width="1.500"/><path d="M937 966h4M939 964v4M937 971h4" stroke="#666"/>
<rect x="951" y="963" width="16" height="20" fill="none" stroke="#666" stroke-dasharray="2 1.500"/><circle cx="958" cy="971" r="6" fill="#dcdcdc" stroke="#777"/><path d="M962 976l3 4" stroke="#c48a30" stroke-width="1.500"/>
<path d="M973 971h5l-2.500 3.500z" fill="#777"/>
<rect x="985" y="966" width="15" height="12" fill="#bbb" stroke="#666" stroke-width="1.300"/><path d="M992.500 978v3M988 981.500h9" stroke="#666"/>
<path d="M1004 971h5l-2.500 3.500z" fill="#777"/>
<rect x="1016" y="965" width="14" height="14" fill="#fff" stroke="#777"/><path d="M1016 969.500h14M1016 974h14M1020.500 965v14M1025 965v14" stroke="#777"/>
<path d="M1035.500 971h5l-2.500 3.500z" fill="#777"/>
<rect x="1047.500" y="966" width="15" height="14" fill="none" stroke="#777"/><path d="M1055 966v14M1047.500 973h15" stroke="#777"/><rect x="1050" y="968" width="3" height="3" fill="#999"/><rect x="1057" y="968" width="3" height="3" fill="#999"/><rect x="1050" y="975" width="3" height="3" fill="#999"/><rect x="1057" y="975" width="3" height="3" fill="#999"/>
<path d="M1066.500 971h5l-2.500 3.500z" fill="#777"/>
</g>

<!-- alerts -->
<path d="M1867.500 967l8 14h-16z" fill="#f7c72a" stroke="#555"/><path d="M1867.500 971.500v5M1867.500 978v1.500" stroke="#222" stroke-width="1.400"/>
<path d="M1894 967a7 7 0 0 1 7 7v5a3 3 0 0 1-3 3h-4a7 7 0 0 1 0-15z" fill="#111"/><path d="M1890 977l8-6M1891 979l8-6" stroke="#aaa"/>

<!-- timeline -->
<rect y="991" width="1911" height="47" fill="#f3f3f3"/>
<rect y="1036" width="1911" height="2" fill="#1f2328"/><rect x="43" y="1036" width="287" height="2" fill="#9c9c9c"/>
<path d="M6 1009v13M17 1009v13L8 1015.500zM43 1009v13l-9-6.500zM34 1012h-3v7h3zM55 1008l13 7.500-13 7.500zM80 1012h3v7h-3zM83 1009v13l9-6.500zM106 1009v13l9-6.500zM117.500 1009v13" fill="#7a7a7a" stroke="#7a7a7a"/>
<rect x="353" y="1003" width="71.500" height="24" rx="3" fill="#f6d7a4"/>
<rect x="449" y="1003" width="24" height="24" rx="3" fill="#f6d7a4"/>
<g id="tl">
<use href="#skp" x="149" y="1015"/><use href="#tex" x="173" y="1015"/><use href="#skp" x="197" y="1015"/><use href="#skr" x="221" y="1015"/><use href="#tbx" x="245" y="1015"/><use href="#tex" x="269" y="1015"/><use href="#tmv" x="293" y="1015"/><use href="#skp" x="317" y="1015"/><use href="#tex" x="341" y="1015"/><use href="#tex" x="365" y="1015"/><use href="#tex" x="389" y="1015"/><use href="#tex" x="413" y="1015"/><use href="#tex" x="437" y="1015"/><use href="#skr" x="461" y="1015"/><use href="#tex" x="485" y="1015"/><use href="#tex" x="509" y="1015"/><use href="#tex" x="533" y="1015"/><use href="#skr" x="557" y="1015"/><use href="#tmv" x="581" y="1015"/><use href="#skr" x="605" y="1015"/><use href="#tln" x="629" y="1015"/><use href="#tmv" x="653" y="1015"/><use href="#tcp" x="677" y="1015"/><use href="#tcp" x="701" y="1015"/><use href="#tcp" x="725" y="1015"/><use href="#tln" x="749" y="1015"/><use href="#tmv" x="773" y="1015"/><use href="#tex" x="797" y="1015"/><use href="#tex" x="821" y="1015"/><use href="#tln" x="845" y="1015"/><use href="#tmv" x="869" y="1015"/><use href="#tpl" x="893" y="1015"/><use href="#skp" x="917" y="1015"/><use href="#tbx" x="941" y="1015"/><use href="#tex" x="965" y="1015"/><use href="#skr" x="989" y="1015"/><use href="#tbx" x="1013" y="1015"/><use href="#tex" x="1037" y="1015"/><use href="#tex" x="1061" y="1015"/><use href="#skp" x="1085" y="1015"/><use href="#tex" x="1109" y="1015"/><use href="#skp" x="1133" y="1015"/><use href="#skp" x="1157" y="1015"/><use href="#tex" x="1181" y="1015"/><use href="#skr" x="1205" y="1015"/><use href="#tex" x="1229" y="1015"/><use href="#skp" x="1253" y="1015"/><use href="#tex" x="1277" y="1015"/><use href="#skp" x="1301" y="1015"/><use href="#skp" x="1325" y="1015"/><use href="#tex" x="1349" y="1015"/><use href="#tex" x="1373" y="1015"/><use href="#skr" x="1397" y="1015"/><use href="#tex" x="1421" y="1015"/><use href="#skp" x="1445" y="1015"/><use href="#skp" x="1469" y="1015"/><use href="#skp" x="1493" y="1015"/><use href="#tbx" x="1517" y="1015"/><use href="#tcb" x="1541" y="1015"/><use href="#tbx" x="1565" y="1015"/><use href="#tcb" x="1589" y="1015"/><use href="#tbx" x="1613" y="1015"/><use href="#tcb" x="1637" y="1015"/><use href="#tln" x="1661" y="1015"/><use href="#tmv" x="1685" y="1015"/><use href="#tmv" x="1709" y="1015"/><use href="#tmv" x="1733" y="1015"/><use href="#tmv" x="1757" y="1015"/><use href="#tln" x="1781" y="1015"/><use href="#tmv" x="1805" y="1015"/><use href="#tmv" x="1829" y="1015"/>
</g>
<rect x="149" y="1031" width="1680" height="2.200" fill="#c8c8c8"/>
<path d="M149 1026v5M173 1026v5M197 1026v5M221 1026v5M245 1026v5M269 1026v5M293 1026v5M317 1026v5M341 1026v5M365 1026v5M389 1026v5M413 1026v5M437 1026v5M461 1026v5M485 1026v5M509 1026v5M533 1026v5M557 1026v5M581 1026v5M605 1026v5M629 1026v5M653 1026v5M677 1026v5M701 1026v5M725 1026v5M749 1026v5M773 1026v5M797 1026v5M821 1026v5M845 1026v5M869 1026v5M893 1026v5M917 1026v5M941 1026v5M965 1026v5M989 1026v5M1013 1026v5M1037 1026v5M1061 1026v5M1085 1026v5M1109 1026v5M1133 1026v5M1157 1026v5M1181 1026v5M1205 1026v5M1229 1026v5M1253 1026v5M1277 1026v5M1301 1026v5M1325 1026v5M1349 1026v5M1373 1026v5M1397 1026v5M1421 1026v5M1445 1026v5M1469 1026v5M1493 1026v5M1517 1026v5M1541 1026v5M1565 1026v5M1589 1026v5M1613 1026v5M1637 1026v5M1661 1026v5M1685 1026v5M1709 1026v5M1733 1026v5M1757 1026v5M1781 1026v5M1805 1026v5M1829 1026v5" stroke="#c8c8c8" stroke-width="1"/>
<path d="M1835 1001h12v4l-6 5-6-5z" fill="#333"/><rect x="1840" y="1005" width="2.200" height="28" fill="#333"/>
<g transform="translate(1893.500 1015)"><circle r="6" fill="none" stroke="#7f7f7f" stroke-width="3.600"/><path d="M0-9v3.500M0 5.500v3.500M-9 0h3.500M5.500 0h3.500M-6.300-6.300l2.500 2.500M3.800 3.800l2.500 2.500M6.300-6.300l-2.500 2.500M-3.800 3.800l-2.500 2.500" stroke="#7f7f7f" stroke-width="3"/></g>
</svg>
</body></html>
